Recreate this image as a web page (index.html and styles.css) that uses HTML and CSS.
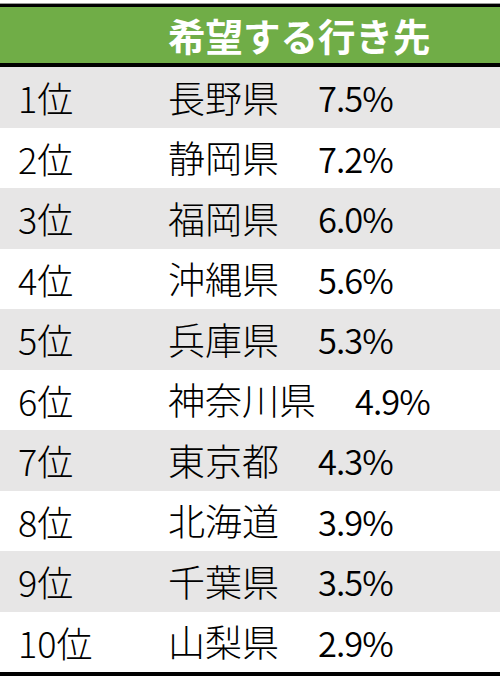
FILE: index.html
```html
<!DOCTYPE html>
<html lang="ja">
<head>
<meta charset="utf-8">
<link rel="stylesheet" href="styles.css">
</head>
<body>
<div class="table">
  <div class="head"><span class="name-col">希望する行き先</span></div>
  <div class="row odd"><span class="rank">1位</span><span class="name">長野県</span><span class="pct">7.5%</span></div>
  <div class="row"><span class="rank">2位</span><span class="name">静岡県</span><span class="pct">7.2%</span></div>
  <div class="row odd"><span class="rank">3位</span><span class="name">福岡県</span><span class="pct">6.0%</span></div>
  <div class="row"><span class="rank">4位</span><span class="name">沖縄県</span><span class="pct">5.6%</span></div>
  <div class="row odd"><span class="rank">5位</span><span class="name">兵庫県</span><span class="pct">5.3%</span></div>
  <div class="row"><span class="rank">6位</span><span class="name">神奈川県</span><span class="pct">4.9%</span></div>
  <div class="row odd"><span class="rank">7位</span><span class="name">東京都</span><span class="pct">4.3%</span></div>
  <div class="row"><span class="rank">8位</span><span class="name">北海道</span><span class="pct">3.9%</span></div>
  <div class="row odd"><span class="rank">9位</span><span class="name">千葉県</span><span class="pct">3.5%</span></div>
  <div class="row"><span class="rank">10位</span><span class="name">山梨県</span><span class="pct">2.9%</span></div>
</div>
</body>
</html>
```
FILE: styles.css
```css
html, body {
  margin: 0;
  padding: 0;
  background: #ffffff;
}
body {
  padding-top: 3px;
  font-family: "Noto Sans CJK JP", sans-serif;
  color: #000;
}
.table {
  border-top: 1px solid #9a9a9a;
}
.head {
  background: #70ad47;
  border-top: 3px solid #000;
  border-bottom: 4px solid #000;
  height: 56px;
  display: flex;
  align-items: center;
  color: #fff;
  font-weight: 700;
  font-size: 37.5px;
  padding-left: 168px;
  line-height: 1;
}
.row {
  height: 60.5px;
  display: flex;
  align-items: center;
  font-size: 36px;
  font-weight: 200;
  line-height: 1;
}
.row.odd {
  background: #e7e6e6;
}
.row:last-child {
  border-bottom: 4px solid #000;
}
.rank {
  width: 150px;
  padding-left: 18px;
}
.name {
  font-size: 37px;
  margin-right: 39px;
}
.pct {
  font-size: 34.5px;
  font-weight: 350;
  letter-spacing: -1px;
}
```
